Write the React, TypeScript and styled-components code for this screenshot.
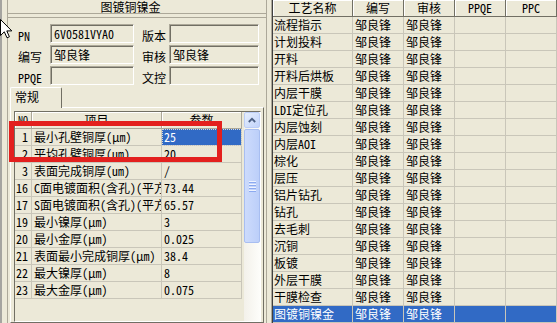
import styled, { createGlobalStyle } from "styled-components"

const GlobalStyle = createGlobalStyle`
    html, body {
        margin: 0;
        padding: 0;
        background: #ece9d8;
    }
    body {
        font-family: "Noto Sans Mono CJK SC", "Noto Sans CJK SC", sans-serif;
        font-size: 12px;
        color: #000;
    }
`

const fields = [
    { label: "PN", value: "6V0581VYA0", label2: "版本", value2: "" },
    { label: "编写", value: "邹良锋", label2: "审核", value2: "邹良锋" },
    { label: "PPQE", value: "", label2: "文控", value2: "" },
]

const params = [
    ["1", "最小孔壁铜厚(μm)", "25"],
    ["2", "平均孔壁铜厚(um)", "20"],
    ["3", "表面完成铜厚(um)", "/"],
    ["16", "C面电镀面积(含孔)(平方米)", "73.44"],
    ["17", "S面电镀面积(含孔)(平方米)", "65.57"],
    ["19", "最小镍厚(μm)", "3"],
    ["20", "最小金厚(μm)", "0.025"],
    ["21", "表面最小完成铜厚(μm)", "38.4"],
    ["22", "最大镍厚(μm)", "8"],
    ["23", "最大金厚(μm)", "0.075"],
]

const processes = [
    "流程指示",
    "计划投料",
    "开料",
    "开料后烘板",
    "内层干膜",
    "LDI定位孔",
    "内层蚀刻",
    "内层AOI",
    "棕化",
    "层压",
    "铝片钻孔",
    "钻孔",
    "去毛刺",
    "沉铜",
    "板镀",
    "外层干膜",
    "干膜检查",
    "图镀铜镍金",
]

const PARAM_COLS = "17px 130px 80px"
const PROCESS_COLS = "80px 51px 51px 51px 1fr"

export default function App() {
    return (
        <Root>
            <GlobalStyle />
            <LeftPane>
                <Frame>
                    <TitleBar>图镀铜镍金</TitleBar>
                    <InfoBox>
                        <FieldGrid>
                            {fields.map((f) => (
                                <FieldRow key={f.label}>
                                    <Label>{f.label}</Label>
                                    <Field>{f.value}</Field>
                                    <Label $inset>{f.label2}</Label>
                                    <Field>{f.value2}</Field>
                                </FieldRow>
                            ))}
                        </FieldGrid>
                    </InfoBox>
                    <TabStrip>
                        <Tab>常规</Tab>
                    </TabStrip>
                    <TabPage>
                        <GridBox>
                            <ParamTable>
                                <Row $cols={PARAM_COLS}>
                                    <HeadCell $small>NO</HeadCell>
                                    <HeadCell>项目</HeadCell>
                                    <HeadCell>参数</HeadCell>
                                </Row>
                                {params.map(([no, item, value], i) => (
                                    <Row key={no} $cols={PARAM_COLS}>
                                        <NumCell>{no}</NumCell>
                                        <Cell>{item}</Cell>
                                        <Cell $focused={i === 0}>{value}</Cell>
                                    </Row>
                                ))}
                            </ParamTable>
                            <ScrollBar>
                                <ScrollButton>
                                    <svg width="8" height="6" viewBox="0 0 8 6">
                                        <path
                                            d="M0.8 5 L4 1.8 L7.2 5"
                                            fill="none"
                                            stroke="#4d6185"
                                            strokeWidth="1.8"
                                        />
                                    </svg>
                                </ScrollButton>
                                <ScrollThumb>
                                    <Grip />
                                    <Grip />
                                    <Grip />
                                    <Grip />
                                </ScrollThumb>
                            </ScrollBar>
                        </GridBox>
                    </TabPage>
                </Frame>
            </LeftPane>

            <RightPane>
                <ProcessTable>
                    <Row $cols={PROCESS_COLS}>
                        <HeadCell $dark>工艺名称</HeadCell>
                        <HeadCell $dark>编写</HeadCell>
                        <HeadCell $dark>审核</HeadCell>
                        <HeadCell $dark>PPQE</HeadCell>
                        <HeadCell $dark>PPC</HeadCell>
                    </Row>
                    {processes.map((name, i) => {
                        const selected = i === processes.length - 1
                        return (
                            <Row key={name} $cols={PROCESS_COLS} $selected={selected}>
                                <Cell $tight>{name}</Cell>
                                <Cell>邹良锋</Cell>
                                <Cell>邹良锋</Cell>
                                <Cell />
                                <Cell />
                            </Row>
                        )
                    })}
                </ProcessTable>
            </RightPane>

            <Highlight />
            <Cursor width="13" height="20" viewBox="0 0 13 20">
                <path
                    d="M0.5 0.5 L0.5 16.5 L4.3 12.8 L7 18.8 L9.4 17.8 L6.8 11.9 L11.8 11.9 Z"
                    fill="#fff"
                    stroke="#000"
                    strokeWidth="1"
                    strokeLinejoin="miter"
                />
            </Cursor>
        </Root>
    )
}

const Root = styled.div`
    position: relative;
    display: flex;
    width: 557px;
    height: 323px;
    overflow: hidden;
    background: #ece9d8;
`

const LeftPane = styled.div`
    flex: none;
    width: 268px;
    box-sizing: border-box;
    display: flex;
    border-left: 2px solid #a5a4a0;
    padding: 0 1px 0 5px;
`

const Frame = styled.div`
    flex: 1;
    min-width: 0;
    display: flex;
    flex-direction: column;
    border-left: 1px solid #aca899;
    border-right: 1px solid #aca899;
`

const TitleBar = styled.div`
    height: 13px;
    line-height: 14px;
    border-bottom: 1px solid #aca899;
    text-align: center;
    padding-right: 13px;
    white-space: nowrap;
`

const InfoBox = styled.div`
    margin-top: 3px;
    border-top: 1px solid #aca899;
    padding: 6px 0 0 10px;
`

const FieldGrid = styled.div`
    display: flex;
    flex-direction: column;
    gap: 2px;
`

const FieldRow = styled.div`
    display: grid;
    grid-template-columns: 32px 84px 35px 90px;
    height: 19px;
`

const Label = styled.div<{ $inset?: boolean }>`
    padding: 4px 0 0 ${({ $inset }) => ($inset ? "8px" : "0")};
    line-height: 15px;
    white-space: nowrap;
`

const Field = styled.div`
    box-sizing: border-box;
    border: 1px solid;
    border-color: #aca899 #fff #fff #aca899;
    box-shadow: inset 1px 1px 0 #716f64;
    padding: 1px 0 0 3px;
    line-height: 15px;
    white-space: nowrap;
    overflow: hidden;
`

const TabStrip = styled.div`
    display: flex;
    margin-top: 2px;
    padding-left: 2px;
    height: 20px;
`

const Tab = styled.div`
    position: relative;
    z-index: 1;
    width: 52px;
    height: 21px;
    box-sizing: border-box;
    border: 1px solid;
    border-color: #fff #716f64 transparent #fff;
    border-bottom: none;
    border-radius: 2px 2px 0 0;
    background: #ece9d8;
    padding-left: 4px;
    line-height: 18px;
`

const TabPage = styled.div`
    flex: 1;
    min-height: 0;
    display: flex;
    margin: 0 2px;
    border: 1px solid;
    border-color: #fff #716f64 #716f64 #fff;
    padding: 3px 2px 0 3px;
`

const GridBox = styled.div`
    flex: 1;
    display: flex;
    align-items: stretch;
    border: 1px solid;
    border-color: #716f64 #fff #fff #716f64;
`

const ParamTable = styled.div`
    flex: none;
    width: 228px;
    overflow: hidden;
`

const Row = styled.div<{ $cols: string; $selected?: boolean }>`
    display: grid;
    grid-template-columns: ${({ $cols }) => $cols};
    height: 17px;
    background: ${({ $selected }) => ($selected ? "#316ac5" : "transparent")};
    color: ${({ $selected }) => ($selected ? "#fff" : "#000")};
`

const HeadCell = styled.div<{ $small?: boolean; $dark?: boolean }>`
    box-sizing: border-box;
    border-right: 1px solid ${({ $dark }) => ($dark ? "#716f64" : "#aca899")};
    border-bottom: 1px solid ${({ $dark }) => ($dark ? "#716f64" : "#aca899")};
    box-shadow: inset 1px 1px 0 #fff;
    text-align: center;
    line-height: 16px;
    font-size: ${({ $small }) => ($small ? "10px" : "12px")};
    white-space: nowrap;
    overflow: hidden;
`

const Cell = styled.div<{ $focused?: boolean; $tight?: boolean }>`
    box-sizing: border-box;
    border-right: 1px solid #c9c6b9;
    border-bottom: 1px solid #c9c6b9;
    padding-left: ${({ $tight }) => ($tight ? "1px" : "2px")};
    line-height: 16px;
    white-space: nowrap;
    overflow: hidden;
    background: ${({ $focused }) => ($focused ? "#316ac5" : "transparent")};
    color: ${({ $focused }) => ($focused ? "#fff" : "inherit")};
    outline: ${({ $focused }) => ($focused ? "1px dotted #d8d8d8" : "none")};
    outline-offset: -1px;
`

const NumCell = styled(Cell)`
    text-align: right;
    padding: 0 3px 0 0;
`

const ScrollBar = styled.div`
    flex: none;
    width: 16px;
    margin-left: 1px;
    display: flex;
    flex-direction: column;
    gap: 1px;
    background: linear-gradient(to right, #f3f1ea, #fdfdfa);
`

const ScrollButton = styled.div`
    height: 16px;
    box-sizing: border-box;
    display: flex;
    align-items: center;
    justify-content: center;
    border: 1px solid #bccef7;
    border-radius: 2px;
    background: linear-gradient(135deg, #e6eefc, #c2d4fb);
`

const ScrollThumb = styled.div`
    height: 114px;
    box-sizing: border-box;
    display: flex;
    flex-direction: column;
    align-items: center;
    justify-content: center;
    gap: 1px;
    border: 1px solid #a8bef1;
    border-radius: 2px;
    background: linear-gradient(to right, #cddbfc, #bccff9);
`

const Grip = styled.div`
    width: 7px;
    height: 1px;
    background: #eef3fe;
    box-shadow: 0 1px 0 #8caaf0;
    margin-bottom: 1px;
`

const RightPane = styled.div`
    flex: 1;
    min-width: 0;
    margin-left: 3px;
    border-left: 1px solid #aca899;
    overflow: hidden;
`

const ProcessTable = styled.div`
    border-left: 1px solid #404040;
`

const Highlight = styled.div`
    position: absolute;
    left: 9px;
    top: 121px;
    width: 213px;
    height: 41px;
    box-sizing: border-box;
    border: 5px solid #e3201e;
    pointer-events: none;
`

const Cursor = styled.svg`
    position: absolute;
    left: 0;
    top: 19px;
`
